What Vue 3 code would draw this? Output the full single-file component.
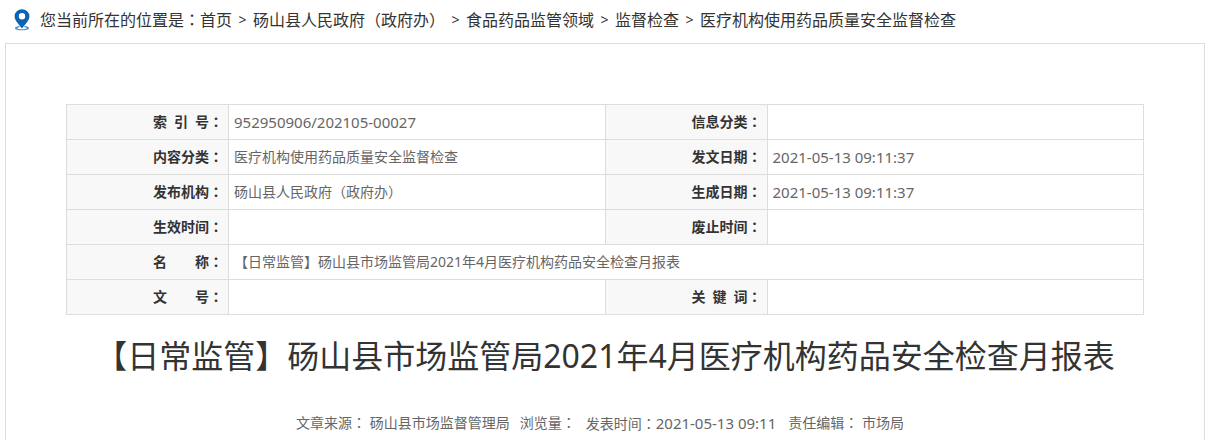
<script setup>
const crumbs = [
  '首页',
  '砀山县人民政府（政府办）',
  '食品药品监管领域',
  '监督检查',
  '医疗机构使用药品质量安全监督检查',
]

const rows = [
  [
    { label: '索\u2002引\u2002号', value: '952950906/202105-00027', numeric: true },
    { label: '信息分类', value: '' },
  ],
  [
    { label: '内容分类', value: '医疗机构使用药品质量安全监督检查' },
    { label: '发文日期', value: '2021-05-13 09:11:37', numeric: true },
  ],
  [
    { label: '发布机构', value: '砀山县人民政府（政府办）' },
    { label: '生成日期', value: '2021-05-13 09:11:37', numeric: true },
  ],
  [
    { label: '生效时间', value: '' },
    { label: '废止时间', value: '' },
  ],
  [{ label: '名\u3000\u3000称', value: '【日常监管】砀山县市场监管局2021年4月医疗机构药品安全检查月报表' }],
  [
    { label: '文\u3000\u3000号', value: '' },
    { label: '关\u2002键\u2002词', value: '' },
  ],
]
</script>

<template>
  <div class="page">
    <nav class="crumbs" aria-label="当前位置">
      <svg class="pin" viewBox="0 0 16 22" width="16" height="22" aria-hidden="true">
        <path d="M1 19.2C1 17.9 3.4 17.1 5.3 17L6 18C4.6 18.2 3.4 18.6 3.4 19.2C3.4 20 5.6 20.3 8 20.3S12.6 20 12.6 19.2C12.6 18.6 11.4 18.2 10 18L10.7 17C12.6 17.1 15 17.9 15 19.2C15 20.7 11.6 21.3 8 21.3S1 20.7 1 19.2Z" fill="#4f8fc9" />
        <path fill-rule="evenodd" d="M8 0.2A7.4 7.2 0 0 0 0.6 7.4C0.6 11.6 5 15.4 8 19.4C11 15.4 15.4 11.6 15.4 7.4A7.4 7.2 0 0 0 8 0.2ZM8 4A3.2 3.2 0 1 1 8 10.4A3.2 3.2 0 1 1 8 4Z" fill="#0a63b5" />
      </svg>
      <span>您当前所在的位置是<span class="colon">：</span></span>
      <template v-for="(crumb, i) in crumbs" :key="crumb">
        <span v-if="i" class="sep">&gt;</span>
        <a href="#">{{ crumb }}</a>
      </template>
    </nav>

    <main class="panel">
      <table class="info">
        <colgroup>
          <col class="col-label" />
          <col />
          <col class="col-label" />
          <col />
        </colgroup>
        <tbody>
          <tr v-for="(row, r) in rows" :key="r">
            <template v-for="cell in row" :key="cell.label">
              <th scope="row">{{ cell.label }}<span class="colon">：</span></th>
              <td :colspan="row.length === 1 ? 3 : 1" :class="{ numeric: cell.numeric }">{{ cell.value }}</td>
            </template>
          </tr>
        </tbody>
      </table>

      <h1>【日常监管】砀山县市场监管局2021年4月医疗机构药品安全检查月报表</h1>

      <p class="meta">
        <span>文章来源<span class="colon">：</span> 砀山县市场监督管理局</span>
        <span>浏览量<span class="colon">：</span></span>
        <span>发表时间<span class="colon">：</span><span class="numeric">2021-05-13 09:11</span></span>
        <span>责任编辑<span class="colon">：</span> 市场局</span>
      </p>
    </main>
  </div>
</template>

<style>
body {
  background: #fff;
}
</style>

<style scoped>
.page {
  padding: 0 5px;
  color: #333;
  font-family: "Noto Sans", "Noto Sans CJK SC", sans-serif;
}

.colon {
  font-family: "Noto Sans CJK KR", sans-serif;
  line-height: 1;
}

.crumbs {
  display: flex;
  align-items: center;
  height: 43px;
  padding: 0 0 4px 9px;
  box-sizing: border-box;
  font-size: 16px;
  line-height: 24px;
  white-space: nowrap;
}

.pin {
  flex: none;
  margin-right: 10px;
}

.crumbs a {
  color: inherit;
  text-decoration: none;
}

.sep {
  width: 21px;
  font-size: 14px;
  text-align: center;
}

.panel {
  padding: 60px 60px 0;
  border: 1px solid #ddd;
  border-bottom: 0;
}

.info {
  width: 100%;
  table-layout: fixed;
  border-collapse: collapse;
  font-size: 14px;
  line-height: 22px;
}

.col-label {
  width: 162px;
}

.info th,
.info td {
  height: 24px;
  padding: 5px;
  border: 1px solid #ddd;
}

.info th {
  background: #f8f8f8;
  font-weight: bold;
  text-align: right;
}

.info td {
  color: #666;
  text-align: left;
}

.numeric {
  font-size: 15px;
}

h1 {
  margin: 16px 0 0;
  font-size: 32px;
  font-weight: normal;
  line-height: 50px;
  text-align: center;
}

.meta {
  display: flex;
  justify-content: center;
  gap: 10px;
  margin: 30px 0 0;
  padding: 0 10px 4px 0;
  color: #666;
  font-size: 14px;
  line-height: 24px;
}

.meta span:last-child {
  margin-left: 2px;
}

.meta span span:last-child {
  margin-left: 0;
}
</style>
